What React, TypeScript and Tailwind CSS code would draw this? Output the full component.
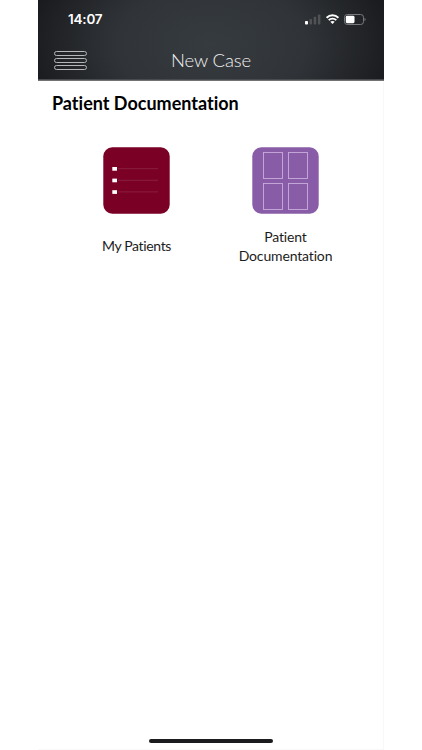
import type { ReactNode } from "react";

function SignalIcon() {
  return (
    <svg width="16" height="11" viewBox="0 0 16 11" aria-hidden="true">
      <rect x="0" y="7" width="3" height="3.5" rx="0.8" fill="#fff" />
      <rect x="4.5" y="5" width="2.5" height="5.5" rx="0.7" fill="#505255" />
      <rect x="8.7" y="2.8" width="2.5" height="7.7" rx="0.7" fill="#505255" />
      <rect x="12.9" y="0.6" width="2.5" height="9.9" rx="0.7" fill="#505255" />
    </svg>
  );
}

function WifiIcon() {
  return (
    <svg width="13" height="10" viewBox="0 0 13 10" fill="none" stroke="#fff" aria-hidden="true">
      <path d="M0.6 3.7C3.8 0.3 9.2 0.3 12.4 3.7" strokeWidth="2" />
      <path d="M2.7 6.2C4.8 4.1 8.2 4.1 10.3 6.2" strokeWidth="1.8" />
      <path d="M4.3 7.7C5.5 6.6 7.5 6.6 8.7 7.7L6.5 10Z" fill="#fff" stroke="none" />
    </svg>
  );
}

function BatteryIcon() {
  return (
    <svg width="22" height="11" viewBox="0 0 22 11" aria-hidden="true">
      <rect x="0.5" y="0.5" width="19" height="10" rx="2.8" fill="none" stroke="#77797c" />
      <rect x="1.8" y="1.8" width="8.7" height="7.4" rx="1.4" fill="#fff" />
      <path d="M20.6 3.8C21.8 4.2 21.8 6.8 20.6 7.2Z" fill="#8b8d90" />
    </svg>
  );
}

function StatusBar() {
  return (
    <div className="flex h-[38px] items-center justify-between pl-[30px] pr-[18px]">
      <span className="pt-px font-['Inter',sans-serif] text-[13.5px] font-semibold leading-none tracking-[-0.2px]">
        14:07
      </span>
      <div className="flex items-center gap-[5px]">
        <SignalIcon />
        <WifiIcon />
        <BatteryIcon />
      </div>
    </div>
  );
}

function Header() {
  return (
    <header className="h-[81px] border-b border-[#707274] bg-[radial-gradient(ellipse_54%_150%_at_50%_55%,#363b3f_0%,#303438_50%,#191a1d_100%)] text-white">
      <StatusBar />
      <div className="grid h-[42px] grid-cols-[1fr_auto_1fr] items-center border-b border-[#484b4e] px-[16px]">
        <button aria-label="Menu" className="flex w-[33px] flex-col gap-[2px] pt-[3px]">
          <span className="h-[5px] w-full rounded-full border border-[#b5b6b8]" />
          <span className="h-[5px] w-full rounded-full border border-[#b5b6b8]" />
          <span className="h-[5px] w-full rounded-full border border-[#b5b6b8]" />
        </button>
        <h1 className="pt-[3px] text-[18.5px] font-light leading-none tracking-[-0.1px] text-[#f0f0f0]">
          New Case
        </h1>
      </div>
    </header>
  );
}

function PatientsIcon() {
  return (
    <svg width="67" height="67" viewBox="0 0 67 67" aria-hidden="true">
      <rect x="0.3" y="0.3" width="66.4" height="66.4" rx="9" fill="#7a0026" />
      {[20, 31.6, 43.2].map((y) => (
        <g key={y}>
          <rect x="9.3" y={y} width="4.7" height="3.7" fill="#fff" />
          <path d={`M15 ${y + 1.7}H55`} stroke="#9b3d5a" strokeWidth="0.5" />
        </g>
      ))}
    </svg>
  );
}

function DocumentationIcon() {
  return (
    <svg width="67" height="67" viewBox="0 0 67 67" aria-hidden="true">
      <rect x="0.3" y="0.3" width="66.4" height="66.4" rx="9" fill="#885ca6" />
      <g fill="none" stroke="#c9addb" strokeWidth="0.9">
        <rect x="11.5" y="5.5" width="19" height="26" />
        <rect x="36.5" y="5.5" width="19" height="26" />
        <rect x="11.5" y="36.5" width="19" height="26" />
        <rect x="36.5" y="36.5" width="19" height="26" />
      </g>
    </svg>
  );
}

function Tile({ icon, children }: { icon: ReactNode; children: ReactNode }) {
  return (
    <button className="flex w-[149px] flex-col items-center">
      {icon}
      <span className="mt-[13px] flex h-[37px] flex-col items-center justify-center whitespace-nowrap text-[14px] leading-[19px] tracking-[-0.15px] text-[#1c1c1c]">
        {children}
      </span>
    </button>
  );
}

export default function App() {
  return (
    <div className="h-[750px] w-[422px] overflow-hidden bg-white pl-[38px] font-['Lato',sans-serif] [font-variant-ligatures:none]">
      <div className="flex h-[750px] w-[346px] flex-col bg-white shadow-[inset_-1px_-1px_0_#f8f8f8]">
        <Header />
        <main className="flex-1">
          <h2 className="pl-[14px] pt-[10px] text-[18px] font-bold leading-[24px] text-black">
            Patient Documentation
          </h2>
          <div className="flex pl-[24px] pt-[32px]">
            <Tile icon={<PatientsIcon />}>
              <span className="tracking-[-0.35px]">My Patients</span>
            </Tile>
            <Tile icon={<DocumentationIcon />}>
              <span>Patient</span>
              <span>Documentation</span>
            </Tile>
          </div>
        </main>
        <div className="mb-[7px] ml-[111px] h-[4px] w-[124px] rounded-full bg-[#1c1c1e]" />
      </div>
    </div>
  );
}
